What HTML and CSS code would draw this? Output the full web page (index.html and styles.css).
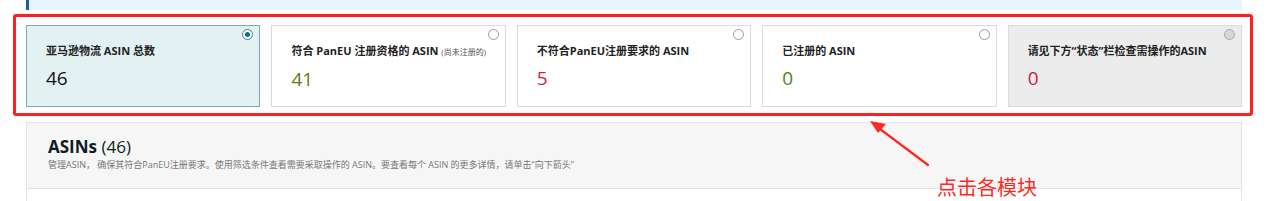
FILE: index.html
```html
<!DOCTYPE html>
<html lang="zh">
<head>
<meta charset="utf-8">
<link rel="stylesheet" href="styles.css">
</head>
<body>
<div class="page">
  <div class="banner"></div>
  <div class="cards">
    <div class="card selected">
      <span class="radio on"></span>
      <div class="label">亚马逊物流 ASIN 总数</div>
      <div class="num n-dark">46</div>
    </div>
    <div class="card">
      <span class="radio"></span>
      <div class="label">符合 PanEU 注册资格的 ASIN <small>(尚未注册的)</small></div>
      <div class="num n-green">41</div>
    </div>
    <div class="card">
      <span class="radio"></span>
      <div class="label">不符合PanEU注册要求的 ASIN</div>
      <div class="num n-red">5</div>
    </div>
    <div class="card">
      <span class="radio"></span>
      <div class="label">已注册的 ASIN</div>
      <div class="num n-green">0</div>
    </div>
    <div class="card disabled">
      <span class="radio grey"></span>
      <div class="label">请见下方“状态”栏检查需操作的ASIN</div>
      <div class="num n-red">0</div>
    </div>
  </div>
  <div class="panel">
    <div class="panel-head">
      <h2>ASINs <span>(46)</span></h2>
      <p>管理ASIN， 确保其符合PanEU注册要求。使用筛选条件查看需要采取操作的 ASIN。要查看每个 ASIN 的更多详情，请单击“向下箭头”</p>
    </div>
    <div class="panel-body"></div>
  </div>

  <div class="annot-box"></div>
  <svg class="annot-arrow" width="80" height="60" viewBox="0 0 80 60">
    <path d="M66 51 L14 12" stroke="#ff2a1f" stroke-width="2.2" fill="none" stroke-linecap="round"/>
    <path d="M8 7 L24 10 L16 19 Z" fill="#ff2a1f"/>
  </svg>
  <div class="annot-text">点击各模块</div>
</div>
</body>
</html>
```
FILE: styles.css
```css
* { box-sizing: border-box; }
html, body { margin: 0; padding: 0; background: #fff; }
body {
  font-family: "Open Sans", "Noto Sans CJK SC", sans-serif;
  color: #0f1111;
  width: 1267px;
  height: 201px;
  overflow: hidden;
}
.page { position: relative; width: 1267px; height: 201px; padding-left: 26px; padding-right: 25px; }
.banner {
  height: 10px;
  background: #e8f4fd;
  border-left: 3px solid #1f5d9d;
}
.cards {
  display: flex;
  gap: 11px;
  margin-top: 15px;
}
.card {
  position: relative;
  flex: 1 1 0;
  height: 82px;
  border: 1px solid #d9dcdc;
  background: #fff;
  padding: 17px 0 0 19px;
}
.card.selected { background: #e3f1f3; border-color: #78aab3; }
.card.disabled { background: #ececec; border-color: #dcdcdc; }
.label {
  font-size: 11px;
  font-weight: 700;
  color: #222;
  line-height: 16px;
  white-space: nowrap;
}
.label small { font-size: 8px; font-weight: 400; color: #555; }
.num {
  font-size: 19px;
  line-height: 24px;
  margin-top: 7px;
}
.n-dark { color: #111; }
.n-green { color: #5b7d12; }
.n-red { color: #cc1e47; }
.radio {
  position: absolute;
  top: 3px;
  right: 6px;
  width: 11px;
  height: 11px;
  border-radius: 50%;
  border: 1px solid #9a9a9a;
  background: #fff;
}
.radio.on { border-color: #2a8a9a; background: #fff; }
.radio.on::after {
  content: "";
  position: absolute;
  left: 2px; top: 2px;
  width: 5px; height: 5px;
  border-radius: 50%;
  background: #0b7285;
}
.radio.grey { background: #d6d6d6; border-color: #a8a8a8; }
.panel {
  margin-top: 15px;
  border: 1px solid #e4e6e6;
  border-bottom: none;
}
.panel-head {
  background: #f6f6f6;
  height: 66px;
  padding: 13px 0 0 21px;
  border-bottom: 1px solid #e0e2e2;
}
.panel-head h2 {
  margin: 0;
  font-size: 17px;
  line-height: 22px;
  font-weight: 700;
  color: #0f1c26;
}
.panel-head h2 span { font-weight: 400; }
.panel-head p {
  margin: 1px 0 0;
  font-size: 9px;
  line-height: 12px;
  color: #777;
  white-space: nowrap;
}
.panel-body { height: 20px; background: #fff; }
.annot-box {
  position: absolute;
  left: 13px;
  top: 14px;
  width: 1240px;
  height: 102px;
  border: 3px solid #ff1f1f;
  border-radius: 3px;
}
.annot-arrow {
  position: absolute;
  left: 862px;
  top: 114px;
}
.annot-text {
  position: absolute;
  left: 937px;
  top: 174px;
  font-size: 20px;
  line-height: 26px;
  color: #ff2a1f;
  font-family: "Noto Sans CJK SC", sans-serif;
  white-space: nowrap;
}
```
